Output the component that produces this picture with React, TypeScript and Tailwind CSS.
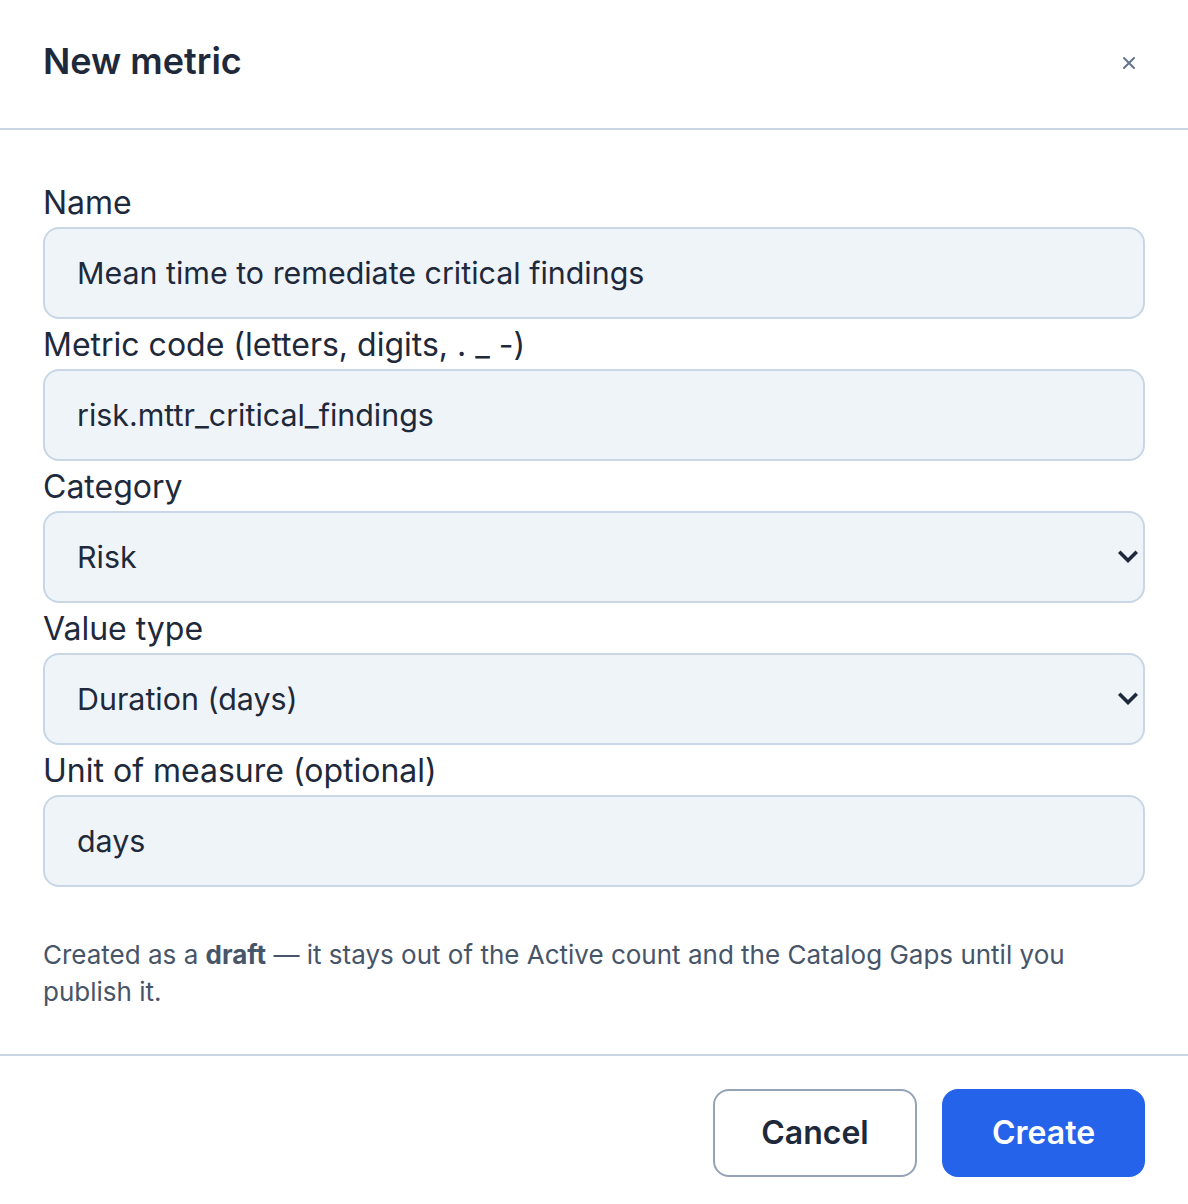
import React from "react";

const labelCls = "block text-[32px] leading-[40px] text-[#1e293b] mb-[4px]";
const boxCls =
  "w-full h-[92px] rounded-[16px] border-2 border-[#c8d6e5] bg-[#eff4f9] pl-[32px] pr-[24px] pt-[2px] text-[30.4px] text-[#1e293b] flex items-center";

function Chevron() {
  return (
    <svg width="20" height="14" viewBox="0 0 20 14" className="absolute right-[5px] top-1/2 -translate-y-1/2" fill="none">
      <polyline points="2.5,3 10,10.5 17.5,3" stroke="#1e293b" strokeWidth="3.6" strokeLinecap="square" />
    </svg>
  );
}

function Field({ label, value, select }: { label: string; value: string; select?: boolean }) {
  return (
    <div>
      <div className={labelCls}>{label}</div>
      <div className={boxCls + " relative"}>
        <span>{value}</span>
        {select && <Chevron />}
      </div>
    </div>
  );
}

export default function App() {
  return (
    <div
      className="w-[1188px] h-[1204px] bg-white flex flex-col"
      style={{ fontFamily: "Inter, 'Noto Sans', sans-serif" }}
    >
      <div className="h-[128px] flex items-center justify-between pl-[43px] pr-[52px] border-b-2 border-[#c8d6e5] box-content">
        <h1 className="text-[36px] font-semibold text-[#1e293b] leading-none -mt-[6px]">New metric</h1>
        <svg width="14" height="14" viewBox="0 0 14 14" className="-mt-[2px]">
          <path d="M2 2 L12 12 M12 2 L2 12" stroke="#64748b" strokeWidth="2" strokeLinecap="round" />
        </svg>
      </div>
      <div className="px-[43px] pt-[53px] pb-[44px] flex flex-col gap-[6px]">
        <Field label="Name" value="Mean time to remediate critical findings" />
        <Field label="Metric code (letters, digits, . _ -)" value="risk.mttr_critical_findings" />
        <Field label="Category" value="Risk" select />
        <Field label="Value type" value="Duration (days)" select />
        <Field label="Unit of measure (optional)" value="days" />
        <p className="mt-[43px] text-[26px] leading-[37px] text-[#475569]">
          Created as a <b className="font-bold">draft</b> — it stays out of the Active count and the Catalog Gaps until you publish it.
        </p>
      </div>
      <div className="border-t-2 border-[#c8d6e5] flex justify-end gap-[25px] pr-[43px] pt-[33px]">
        <button className="w-[204px] h-[88px] rounded-[16px] border-2 border-[#94a3b8] bg-white text-[32px] font-semibold text-[#1e293b]">
          Cancel
        </button>
        <button className="w-[203px] h-[88px] rounded-[16px] bg-[#2563eb] text-[32px] font-semibold text-white">
          Create
        </button>
      </div>
    </div>
  );
}
